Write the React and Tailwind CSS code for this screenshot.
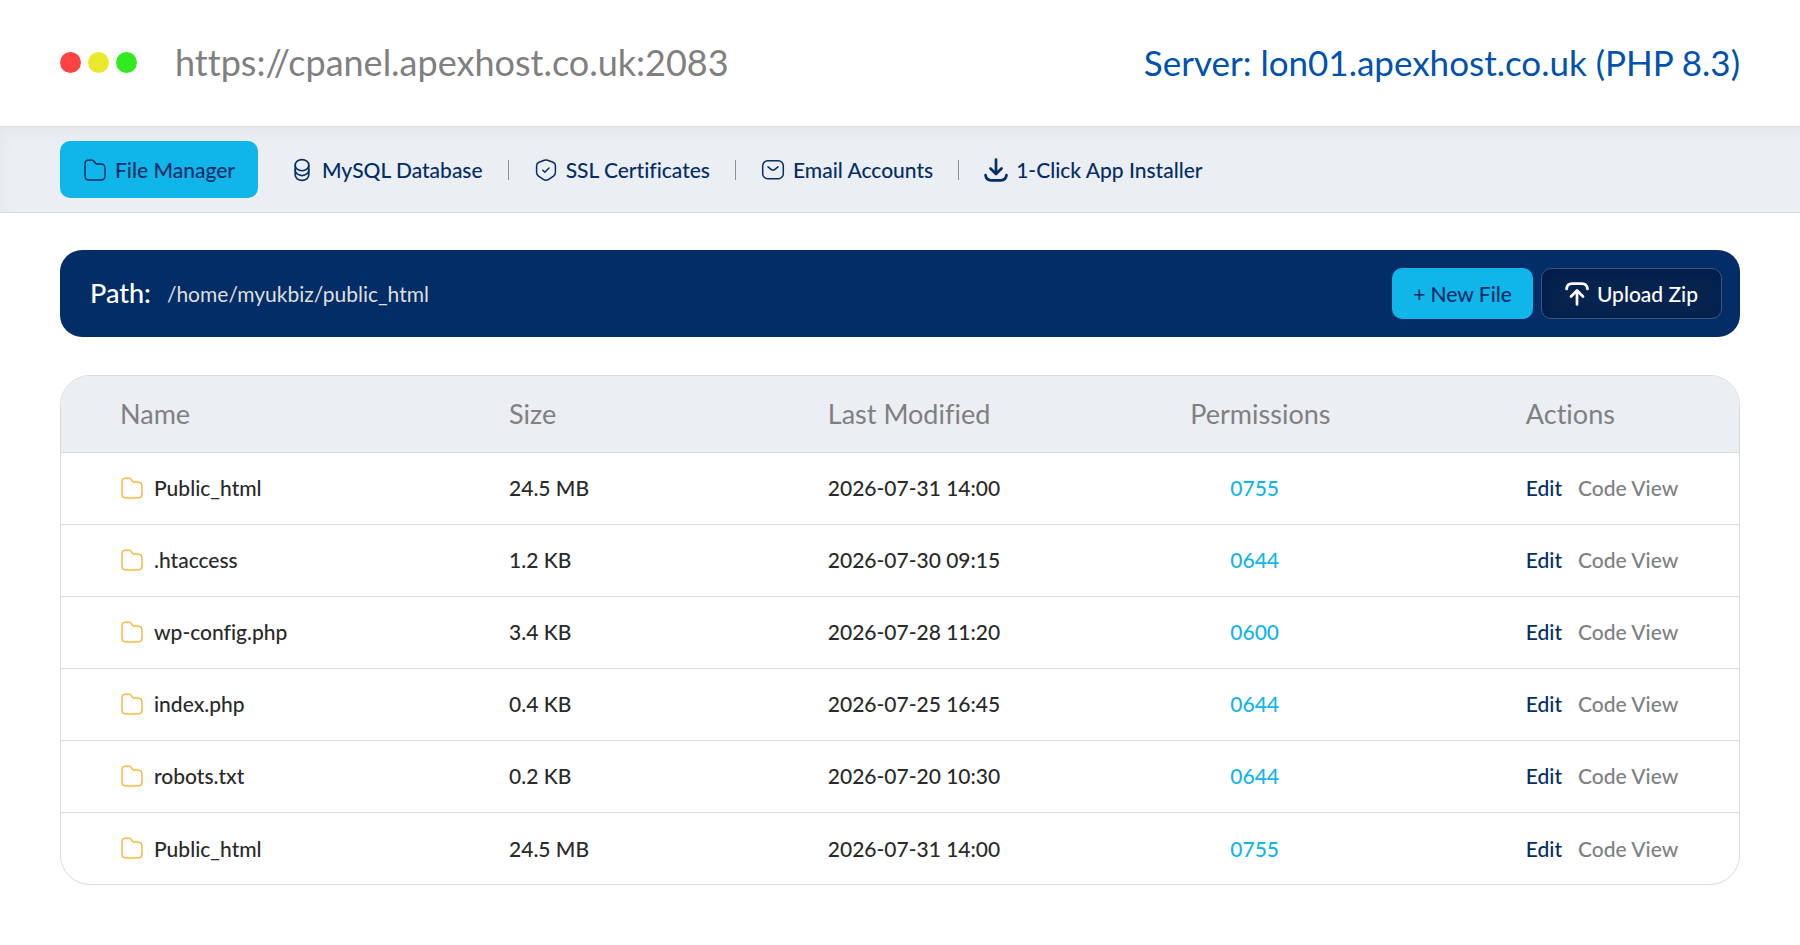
const NAVY = "text-[#032d66]";

function FolderIcon({ className = "" }) {
  return (
    <svg viewBox="0 0 24 24" fill="none" stroke="currentColor" strokeWidth="1.5" strokeLinejoin="round" className={`size-6 shrink-0 ${className}`} aria-hidden="true">
      <path d="M22 11v6c0 4-1 5-5 5H7c-4 0-5-1-5-5V7c0-4 1-5 5-5h1.500c1.500 0 1.830.44 2.400 1.200l1.500 2c.38.5.6.8 1.600.8h3c4 0 5 1 5 5Z" />
    </svg>
  );
}

function DatabaseIcon() {
  return (
    <svg viewBox="0 0 24 24" fill="none" stroke="currentColor" strokeWidth="1.600" strokeLinecap="round" className="size-6 shrink-0" aria-hidden="true">
      <ellipse cx="12" cy="7.200" rx="6.800" ry="5.600" />
      <path d="M5.200 7.200v9.600c0 3.100 3 5.600 6.800 5.600s6.800-2.500 6.800-5.600V7.200" />
      <path d="M5.200 12c0 3.100 3 5.600 6.800 5.600s6.800-2.500 6.800-5.600" />
    </svg>
  );
}

function ShieldIcon() {
  return (
    <svg viewBox="0 0 24 24" fill="none" stroke="currentColor" strokeWidth="1.500" strokeLinecap="round" strokeLinejoin="round" className="size-6 shrink-0" aria-hidden="true">
      <path d="M10.300 2.200 5 4.200c-1.500.6-2.400 1.600-2.400 3.200v7.200c0 1.300.8 2.700 1.900 3.500l4.800 3.300c1.600 1.100 3.800 1.100 5.400 0l4.800-3.300c1.100-.8 1.900-2.200 1.900-3.500V7.400c0-1.600-.9-2.600-2.400-3.200l-5.300-2c-1.100-.4-2.300-.4-3.400 0Z" />
      <path d="m8.800 12.300 2 1.900 4.200-4.200" />
    </svg>
  );
}

function MailIcon() {
  return (
    <svg viewBox="0 0 24 24" fill="none" stroke="currentColor" strokeWidth="1.500" strokeLinecap="round" strokeLinejoin="round" className="size-6 shrink-0" aria-hidden="true">
      <rect x="1.700" y="2.700" width="20.600" height="18" rx="5" />
      <path d="m7 8.800 3.130 2.500c1.030.82 2.720.82 3.750 0L17 8.800" />
    </svg>
  );
}

function DownloadIcon() {
  return (
    <svg viewBox="0 0 24 24" fill="none" stroke="currentColor" strokeWidth="2.700" strokeLinecap="round" strokeLinejoin="round" className="size-6 shrink-0" aria-hidden="true">
      <path d="M12 1.500v14M6.500 10.500l5.500 5.500 5.500-5.500" />
      <path d="M1.500 17c.5 3.800 2 5.300 5.500 5.300h10c3.500 0 5-1.500 5.500-5.300" />
    </svg>
  );
}

function UploadIcon() {
  return (
    <svg viewBox="0 0 24 24" fill="none" stroke="currentColor" strokeWidth="2.700" strokeLinecap="round" strokeLinejoin="round" className="size-6 shrink-0" aria-hidden="true">
      <path d="M12 22.500V9M6 14.500l6-6 6 6" />
      <path d="M1.500 7C2 3.200 3.500 1.700 7 1.700h10c3.500 0 5 1.500 5.500 5.300" />
    </svg>
  );
}

const tabs = [
  { label: "MySQL Database", Icon: DatabaseIcon },
  { label: "SSL Certificates", Icon: ShieldIcon },
  { label: "Email Accounts", Icon: MailIcon },
  { label: "1-Click App Installer", Icon: DownloadIcon },
];

const files = [
  ["Public_html", "24.5 MB", "2026-07-31 14:00", "0755"],
  [".htaccess", "1.2 KB", "2026-07-30 09:15", "0644"],
  ["wp-config.php", "3.4 KB", "2026-07-28 11:20", "0600"],
  ["index.php", "0.4 KB", "2026-07-25 16:45", "0644"],
  ["robots.txt", "0.2 KB", "2026-07-20 10:30", "0644"],
  ["Public_html", "24.5 MB", "2026-07-31 14:00", "0755"],
];

export default function App() {
  return (
    <div className="min-h-screen bg-white font-['Lato',sans-serif] text-[#2a2a2a] [font-variant-ligatures:none]">
      <header className="flex h-[126px] items-center justify-between px-[60px] pb-[2px]">
        <div className="flex items-center">
          <div className="flex gap-[7px]">
            <span className="size-[21px] rounded-full bg-[#ff4343]" />
            <span className="size-[21px] rounded-full bg-[#ebe92e]" />
            <span className="size-[21px] rounded-full bg-[#31ea20]" />
          </div>
          <span className="ml-[38px] text-[36px] text-[#808080]">https://cpanel.apexhost.co.uk:2083</span>
        </div>
        <span className="text-[35px] text-[#0052b0]">Server: lon01.apexhost.co.uk (PHP 8.3)</span>
      </header>

      <nav className={`flex h-[87px] items-center border-y border-[#dcdcdc] bg-[#ebeff4] px-[60px] text-[21px] font-medium shadow-[inset_8px_10px_20px_-8px_rgba(0,0,0,0.04)] ${NAVY}`}>
        <button className="mr-8 flex h-[57px] items-center gap-2 rounded-[10px] bg-[#10b5ea] px-[23px]">
          <FolderIcon />
          File Manager
        </button>
        {tabs.map(({ label, Icon }, i) => (
          <div key={label} className="flex items-center">
            {i > 0 && <span className="mx-[25px] h-5 w-px bg-[#909090]" />}
            <button className="flex items-center gap-2">
              <Icon />
              {label}
            </button>
          </div>
        ))}
      </nav>

      <main className="px-[60px] pt-[37px] pb-[60px]">
        <section className="flex h-[87px] items-center justify-between rounded-[22px] bg-[#032d66] pr-[18px] pl-[30px]">
          <div className="flex items-center gap-4">
            <span className="text-[27px] font-medium text-white">Path:</span>
            <span className="text-[21px] text-[#dfdfdf]">/home/myukbiz/public_html</span>
          </div>
          <div className="flex gap-2 text-[21px] font-medium">
            <button className={`h-[51px] rounded-[10px] bg-[#10b5ea] px-[21px] ${NAVY}`}>+ New File</button>
            <button className="flex h-[51px] items-center gap-2 rounded-[10px] border border-[#3b5581] bg-[#06244f] px-[23px] text-white shadow-[inset_4px_4px_16px_rgba(0,20,70,0.6)]">
              <UploadIcon />
              Upload Zip
            </button>
          </div>
        </section>

        <div className="mt-[38px] overflow-hidden rounded-[30px] border border-[#dadada]">
          <table className="w-full table-fixed text-left text-[21px]">
            <colgroup>
              <col className="w-[26.700%]" />
              <col className="w-[19%]" />
              <col className="w-[21.600%]" />
              <col className="w-[20%]" />
              <col />
            </colgroup>
            <thead className="bg-[#ebeff4] text-[27px] text-[#808080]">
              <tr className="h-[76px] border-b border-[#dadada]">
                <th className="pl-[59px] font-normal">Name</th>
                <th className="font-normal">Size</th>
                <th className="font-normal">Last Modified</th>
                <th className="font-normal">Permissions</th>
                <th className="font-normal">Actions</th>
              </tr>
            </thead>
            <tbody className="font-medium">
              {files.map(([name, size, modified, permissions], i) => (
                <tr key={i} className="h-[72px] border-b border-[#dadada] last:border-b-0">
                  <td className="pl-[59px]">
                    <span className="flex items-center gap-[10px]">
                      <FolderIcon className="text-[#f8b940]" />
                      {name}
                    </span>
                  </td>
                  <td>{size}</td>
                  <td>{modified}</td>
                  <td className="pl-10 text-[#10b5ea]">{permissions}</td>
                  <td className="whitespace-nowrap">
                    <a href="#edit" className={NAVY}>Edit</a>
                    <a href="#code" className="ml-4 text-[#808080]">Code View</a>
                  </td>
                </tr>
              ))}
            </tbody>
          </table>
        </div>
      </main>
    </div>
  );
}
